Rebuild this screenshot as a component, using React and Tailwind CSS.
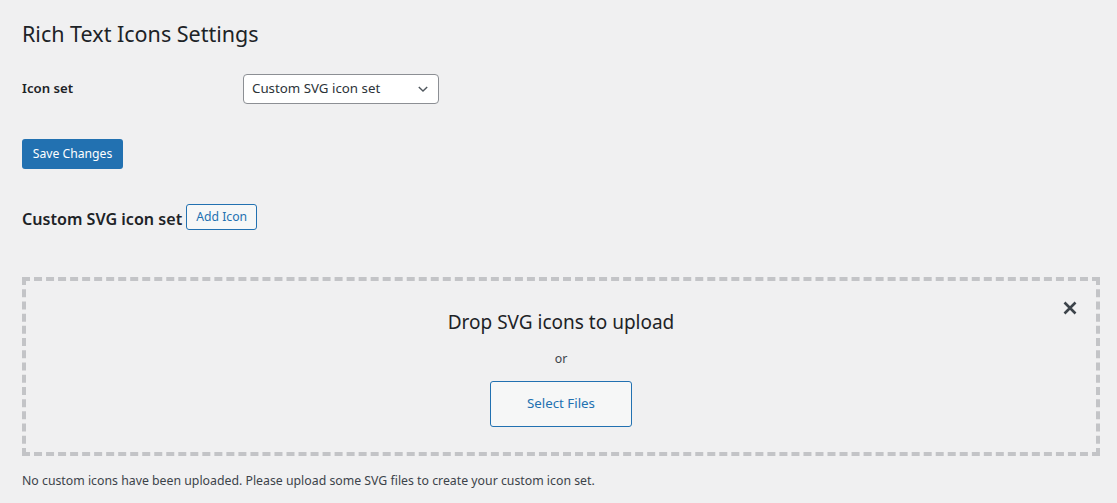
import React from 'react';

export default function App() {
  return (
    <div className="min-h-[503px] bg-[#f0f0f1] text-[#1d2327] font-['Noto_Sans',sans-serif]">
      <div className="pl-[22px] pr-[18px] pt-[19px]">
        <h1 className="text-[21.5px] leading-[30px] font-normal">Rich Text Icons Settings</h1>

        {/* settings row */}
        <div className="mt-[25px] flex items-center">
          <div className="w-[221px] text-[13.2px] font-semibold">Icon set</div>
          <div className="relative w-[196px] h-[30px] rounded-[4px] border border-[#8c8f94] bg-white flex items-center pl-[8px] text-[13.3px] text-[#2c3338]">
            Custom SVG icon set
            <svg className="absolute right-[8px] top-[7px]" width="14" height="14" viewBox="0 0 20 20">
              <path d="M4 7l6 6 6-6" fill="none" stroke="#50575e" strokeWidth="2" />
            </svg>
          </div>
        </div>

        <button className="mt-[35px] h-[30px] w-[101px] rounded-[3px] bg-[#2271b1] text-white text-[12.2px] flex items-center justify-center">
          Save Changes
        </button>

        <div className="mt-[34px] flex items-center gap-[4px]">
          <h2 className="text-[16.1px] font-semibold mt-[4px]">Custom SVG icon set</h2>
          <button className="h-[26px] w-[71px] rounded-[3px] border border-[#2271b1] bg-[#f6f7f7] text-[#2271b1] text-[12.2px] flex items-center justify-center">
            Add Icon
          </button>
        </div>

        {/* drop zone */}
        <div className="relative mt-[46px] w-[1078px] h-[179px] border-4 border-dashed border-[#c3c4c7] flex flex-col items-center">
          <button className="absolute right-[18px] top-[19px]">
            <svg width="16" height="16" viewBox="0 0 16 16">
              <path d="M2.5 2.5l11 11M13.5 2.5l-11 11" stroke="#3c434a" strokeWidth="2.6" />
            </svg>
          </button>
          <div className="mt-[26px] text-[19px] leading-[30px] text-[#1d2327]">Drop SVG icons to upload</div>
          <div className="mt-[13px] text-[12.3px] leading-[18px] text-[#3c434a]">or</div>
          <button className="mt-[13px] h-[46px] w-[142px] rounded-[3px] border border-[#2271b1] bg-[#f6f7f7] text-[#2271b1] text-[13.3px]">
            Select Files
          </button>
        </div>

        <p className="mt-[16px] text-[12.3px] leading-[18px] text-[#3c434a]">
          No custom icons have been uploaded. Please upload some SVG files to create your custom icon set.
        </p>
      </div>
    </div>
  );
}
